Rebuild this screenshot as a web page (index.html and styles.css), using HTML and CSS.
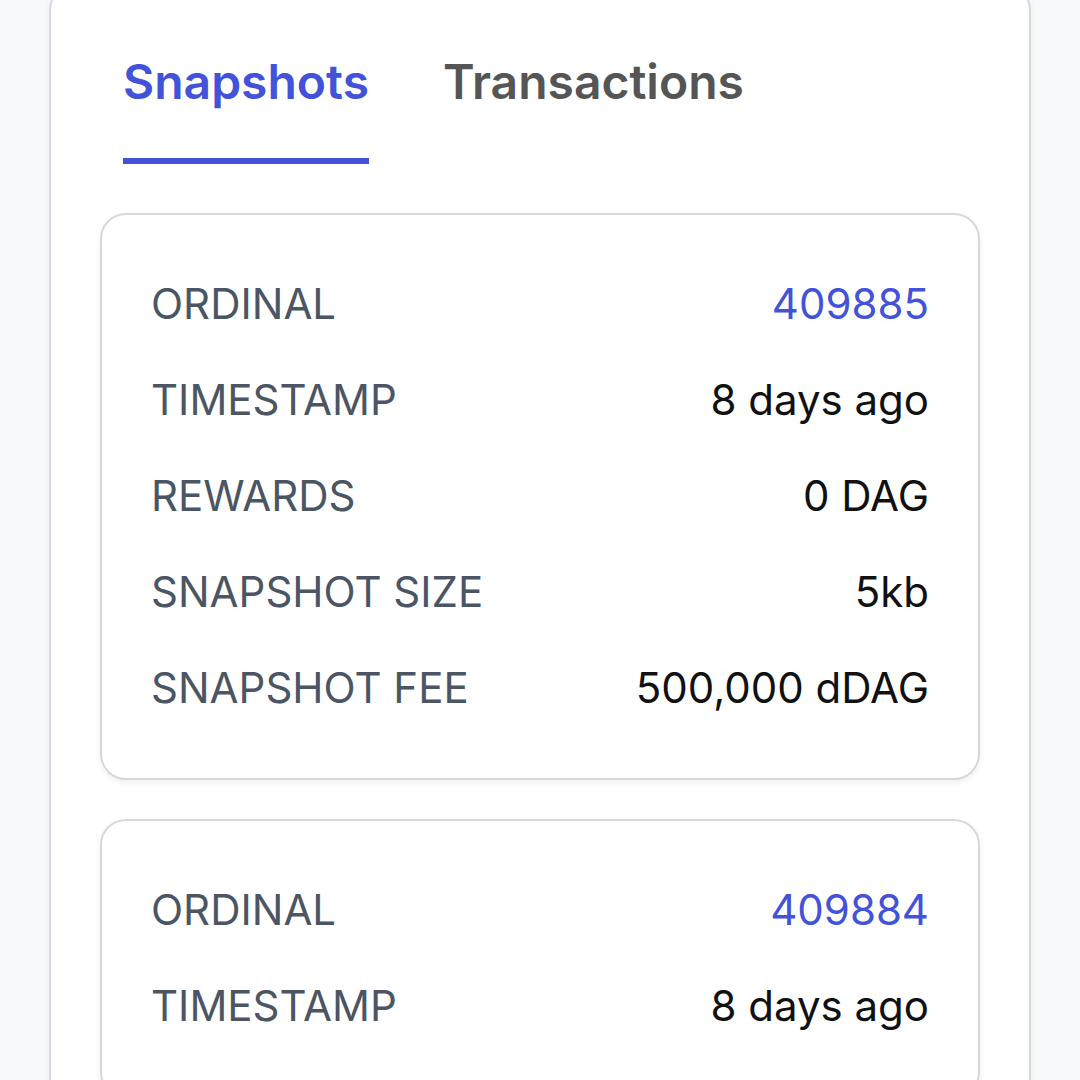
FILE: index.html
```html
<!DOCTYPE html>
<html lang="en">
<head>
    <meta charset="UTF-8">
    <meta name="viewport" content="width=device-width, initial-scale=1.0">
    <title>Snapshots</title>
    <link rel="stylesheet" href="styles.css">
</head>
<body>
    <div class="panel">
        <div class="tabs">
            <a href="#" class="tab active">Snapshots</a>
            <a href="#" class="tab">Transactions</a>
        </div>

        <div class="snapshot-list">
            <div class="snapshot-card">
                <div class="row">
                    <span class="label">ORDINAL</span>
                    <a href="#" class="value link">409885</a>
                </div>
                <div class="row">
                    <span class="label">TIMESTAMP</span>
                    <span class="value">8 days ago</span>
                </div>
                <div class="row">
                    <span class="label">REWARDS</span>
                    <span class="value">0 DAG</span>
                </div>
                <div class="row">
                    <span class="label">SNAPSHOT SIZE</span>
                    <span class="value">5kb</span>
                </div>
                <div class="row">
                    <span class="label">SNAPSHOT FEE</span>
                    <span class="value">500,000 dDAG</span>
                </div>
            </div>

            <div class="snapshot-card">
                <div class="row">
                    <span class="label">ORDINAL</span>
                    <a href="#" class="value link">409884</a>
                </div>
                <div class="row">
                    <span class="label">TIMESTAMP</span>
                    <span class="value">8 days ago</span>
                </div>
            </div>
        </div>
    </div>
</body>
</html>
```

FILE: styles.css
```css
* {
    margin: 0;
    padding: 0;
    box-sizing: border-box;
}

body {
    font-family: 'Inter', 'Noto Sans', sans-serif;
    background: #f8f9fb;
    padding: 0 49px;
    overflow: hidden;
    height: 1080px;
}

.panel {
    margin-top: -16px;
    background: #fff;
    border: 2px solid #d5d8de;
    border-radius: 26px;
    padding: 66px 49px 49px;
    box-shadow: 0 2px 8px rgba(0, 0, 0, 0.05);
}

.tabs {
    display: flex;
    gap: 74px;
    padding-left: 23px;
    margin-bottom: 49px;
}

.tab {
    font-size: 48px;
    font-weight: 600;
    line-height: 60px;
    color: #555;
    text-decoration: none;
    padding-bottom: 46px;
    border-bottom: 6px solid transparent;
}

.tab.active {
    color: #4252d9;
    border-bottom-color: #4252d9;
}

.snapshot-list {
    display: flex;
    flex-direction: column;
    gap: 39px;
}

.snapshot-card {
    border: 2px solid #d5d8de;
    border-radius: 26px;
    padding: 60px 49px 61px;
    display: flex;
    flex-direction: column;
    gap: 38px;
    box-shadow: 0 3px 6px rgba(0, 0, 0, 0.06);
}

.row {
    display: flex;
    justify-content: space-between;
    align-items: center;
    font-size: 42px;
    line-height: 58px;
}

.label {
    color: #4b5563;
}

.value {
    color: #111;
}

.value.link {
    color: #4252d9;
    text-decoration: none;
}
```
